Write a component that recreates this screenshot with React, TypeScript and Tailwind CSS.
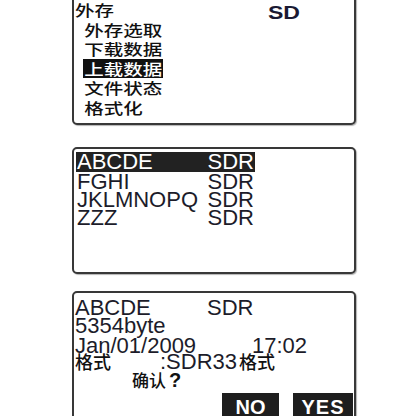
import React from 'react'

const cjk = { fontFamily: '"Noto Sans CJK SC", "Noto Sans", sans-serif' }
const latin = { fontFamily: '"Liberation Sans", Arial, "Noto Sans CJK SC", sans-serif' }

const boxCls =
  'rounded-[5px] border-2 border-[#383838] bg-white shadow-[1px_1px_1px_rgba(0,0,0,0.3)] overflow-hidden'

function MenuRow({ label, active }: { label: string; active?: boolean }) {
  return (
    <div
      className={
        'h-[19.6px] w-[80px] leading-[19.6px] text-[15px] font-medium ' +
        (active ? 'bg-[#111] text-white' : 'text-[#111]')
      }
    >
      <span className="inline-block origin-left scale-x-[1.3] pl-[1px]">{label}</span>
    </div>
  )
}

function FileRow({ name, first }: { name: string; first?: boolean }) {
  return (
    <div
      className={
        'flex w-[179px] justify-between pl-[1px] pr-[1px] text-[22px] ' +
        (first ? 'h-[20px] leading-[20px] bg-[#222] text-white' : 'h-[18px] leading-[18px] text-[#1c1c2a]')
      }
    >
      <span>{name}</span>
      <span>SDR</span>
    </div>
  )
}

export default function App() {
  return (
    <div className="h-[416px] w-[416px] overflow-hidden bg-white">
      <div className="ml-[72px] flex w-[284px] flex-col">
        {/* memory menu */}
        <div className={boxCls + ' -mt-[6px] h-[131px] pt-[4px]'} style={cjk}>
          <div className="flex h-[19.6px] pl-[1px]">
            <span className="inline-block origin-left scale-x-[1.3] text-[15px] font-medium leading-[19.6px] text-[#111]">
              外存
            </span>
            <span
              className="ml-auto mr-[54px] inline-block origin-right scale-x-[1.28] pt-[4px] text-[18px] font-bold leading-[19.6px] text-[#1a1a33]"
              style={latin}
            >
              SD
            </span>
          </div>
          <div className="pl-[9px]">
            <MenuRow label="外存选取" />
            <MenuRow label="下载数据" />
            <MenuRow label="上载数据" active />
            <MenuRow label="文件状态" />
            <MenuRow label="格式化" />
          </div>
        </div>

        {/* file list */}
        <div className={boxCls + ' mt-[22px] h-[127px] pl-[2px] pt-[3px]'} style={latin}>
          <FileRow name="ABCDE" first />
          <div className="mt-[1px]">
            <FileRow name="FGHI" />
            <FileRow name="JKLMNOPQ" />
            <FileRow name="ZZZ" />
          </div>
        </div>

        {/* file detail */}
        <div className={boxCls + ' mt-[17px] h-[140px] pl-[1px] pt-[6px] text-[#1c1c2a]'} style={latin}>
          <div className="flex h-[18px] text-[22px] leading-[18px]">
            <span className="w-[132px]">ABCDE</span>
            <span>SDR</span>
          </div>
          <div className="h-[20px] text-[22px] leading-[18px]">5354byte</div>
          <div className="flex h-[15px] text-[22px] leading-[18px]">
            <span className="w-[177px]">Jan/01/2009</span>
            <span>17:02</span>
          </div>
          <div className="flex h-[19px] items-baseline leading-[18px]">
            <span className="w-[85px] text-[18px] font-medium text-[#111]" style={cjk}>
              格式
            </span>
            <span className="text-[22px]">:SDR33</span>
            <span className="ml-[2px] text-[18px] font-medium text-[#111]" style={cjk}>
              格式
            </span>
          </div>
          <div className="h-[20px] pl-[57px] leading-[18px] text-[#111]">
            <span className="text-[17px] font-medium" style={cjk}>
              确认
            </span>
            <span className="ml-[3px] text-[20px] font-bold">?</span>
          </div>
          <div className="mt-[2px] flex justify-end gap-[14px] pr-[1px]">
            <div className="flex h-[26px] w-[57px] items-center justify-center bg-[#1e1e1e] pt-[1px] text-[20px] font-bold leading-none text-white">
              NO
            </div>
            <div className="flex h-[26px] w-[60px] items-center justify-center bg-[#1e1e1e] pt-[1px] text-[20px] font-bold leading-none tracking-[1px] text-white">
              YES
            </div>
          </div>
        </div>
      </div>
    </div>
  )
}
